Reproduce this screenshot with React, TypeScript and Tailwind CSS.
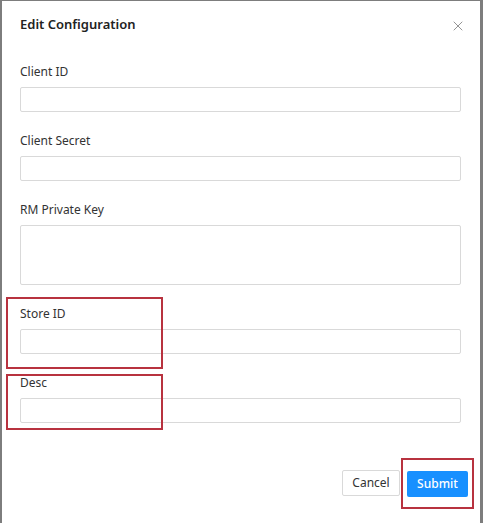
import { X } from 'lucide-react';

const Field = ({ label, tall = false }: { label: string; tall?: boolean }) => (
    <div className="mb-[20px] last:mb-0">
        <label className="block h-[18px] text-[12px] leading-[18px] text-[#333]">{label}</label>
        {tall ? (
            <textarea className="mt-[6px] block h-[60px] w-full resize-none rounded-[2px] border border-[#d9d9d9] bg-white outline-none" />
        ) : (
            <input className="mt-[6px] block h-[25px] w-full rounded-[2px] border border-[#d9d9d9] bg-white outline-none" />
        )}
    </div>
);

const App = () => {
    return (
        <div className="h-[523px] w-[483px] overflow-hidden bg-[#7d7d7d] pl-[2px] pr-[3px] pt-[1px] font-['Noto_Sans','Open_Sans',sans-serif]">
            <div className="relative h-full bg-white">
                <div className="flex items-center justify-between pl-[18px] pr-[14px] pt-[12px]">
                    <h1 className="text-[13px] font-semibold leading-[20px] text-[#222]">Edit Configuration</h1>
                    <button className="mt-[5px] text-[#8c8c8c]" aria-label="Close">
                        <X size={16} strokeWidth={1.4} />
                    </button>
                </div>

                <form className="relative px-[18px] pr-[19px] pt-[29px]">
                    <Field label="Client ID" />
                    <Field label="Client Secret" />
                    <Field label="RM Private Key" tall />
                    <Field label="Store ID" />
                    <Field label="Desc" />

                    {/* annotation boxes */}
                    <div className="pointer-events-none absolute left-[4px] top-[263px] h-[72px] w-[157px] border-2 border-[#b8323f]" />
                    <div className="pointer-events-none absolute left-[4px] top-[340px] h-[56px] w-[157px] border-2 border-[#b8323f]" />
                </form>

                <div className="mt-[47px] flex justify-end gap-[7px] pr-[12px]">
                    <button className="h-[26px] w-[58px] rounded-[2px] border border-[#d9d9d9] bg-white text-[12px] text-[#333]">
                        Cancel
                    </button>
                    <div className="relative">
                        <button className="h-[26px] w-[61px] rounded-[2px] bg-[#1890ff] text-[12px] font-medium text-white">
                            Submit
                        </button>
                        <div className="pointer-events-none absolute -left-[6px] -top-[12px] h-[51px] w-[73px] border-2 border-[#b8323f]" />
                    </div>
                </div>
            </div>
        </div>
    );
};

export default App;
